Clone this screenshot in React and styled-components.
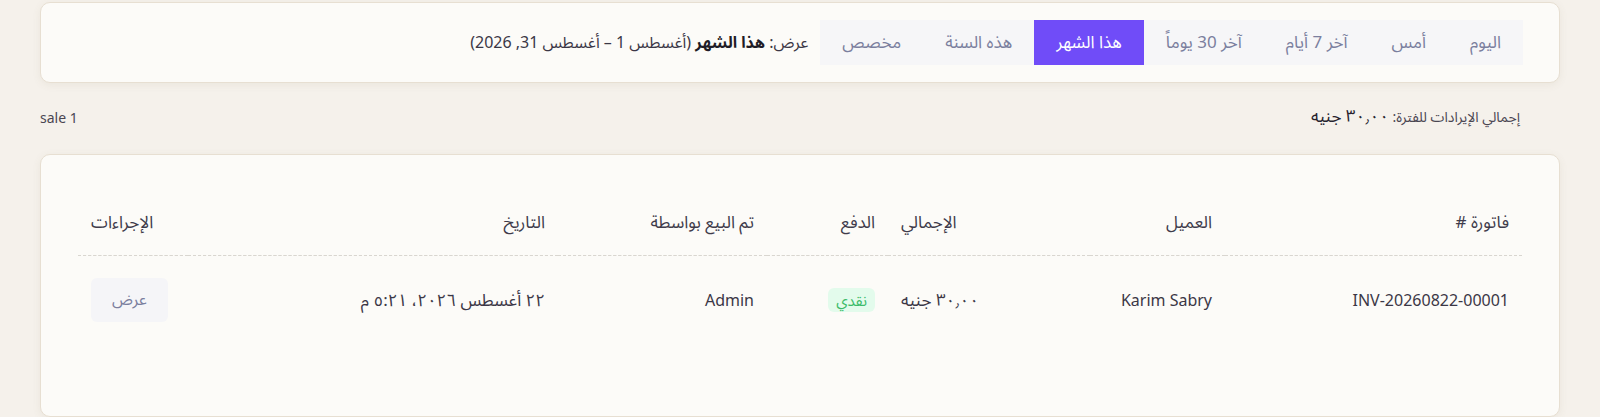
import React from "react";
import styled, { createGlobalStyle } from "styled-components";

const GlobalStyle = createGlobalStyle`
  html, body {
    margin: 0;
    padding: 0;
    background: #f5f1eb;
  }
  body {
    font-family: "Noto Sans", "Noto Sans Arabic", "Noto Kufi Arabic", "DejaVu Sans", sans-serif;
    color: #3b3746;
  }
  * {
    box-sizing: border-box;
  }
`;

const Page = styled.div`
  direction: rtl;
  padding: 2px 40px 0;
`;

const Card = styled.div`
  background: #fcfbf8;
  border: 1px solid #e7dfd2;
  border-radius: 10px;
  box-shadow: 0 2px 8px rgba(120, 100, 70, 0.08);
`;

const FilterCard = styled(Card)`
  display: flex;
  align-items: center;
  gap: 12px;
  padding: 17px 36px;
`;

const TabGroup = styled.div`
  display: flex;
  background: #f6f6f8;
  height: 45px;
`;

const Tab = styled.button`
  border: none;
  background: ${(p) => (p.$active ? "#704cf8" : "transparent")};
  color: ${(p) => (p.$active ? "#ffffff" : "#7b7f9e")};
  font-family: inherit;
  font-size: 17px;
  padding: 0 22px;
  cursor: pointer;
`;

const RangeText = styled.div`
  font-size: 16px;
  color: #3b3746;

  strong {
    font-weight: 700;
    color: #1f1c26;
  }
`;

const Summary = styled.div`
  display: flex;
  justify-content: space-between;
  align-items: center;
  height: 26px;
  margin: 21px 0 24px;
  padding-right: 40px;
`;

const Revenue = styled.div`
  font-size: 14px;
  color: #4a4652;

  span {
    font-size: 17px;
    font-weight: 400;
    color: #26232d;
  }
`;

const Count = styled.div`
  direction: ltr;
  font-size: 14px;
  color: #4a4652;
`;

const TableCard = styled(Card)`
  padding: 36px 37px 72px;
`;

const Table = styled.table`
  width: 100%;
  border-collapse: collapse;
  table-layout: fixed;
`;

const Th = styled.th`
  font-weight: 400;
  font-size: 17px;
  color: #3f3b4b;
  text-align: ${(p) => (p.$end ? "left" : "right")};
  padding: 19px 13px 21px;
  line-height: 24px;
  border-bottom: 1px dashed #d9d6d0;
  white-space: nowrap;
`;

const Td = styled.td`
  font-size: ${(p) => (p.$latin ? "16px" : "17px")};
  color: #3b3746;
  text-align: ${(p) => (p.$end ? "left" : "right")};
  padding: 22px 13px;
  line-height: 24px;
  white-space: nowrap;
`;

const Badge = styled.span`
  display: inline-block;
  background: #e3fbec;
  color: #3dbb6b;
  font-size: 15px;
  padding: 0 8px;
  line-height: 24px;
  border-radius: 6px;
`;

const ViewButton = styled.button`
  border: none;
  background: #f5f5f8;
  color: #7b7f9e;
  font-family: inherit;
  font-size: 16px;
  width: 77px;
  height: 44px;
  border-radius: 6px;
  cursor: pointer;
`;

const tabs = [
  "اليوم",
  "أمس",
  "آخر 7 أيام",
  "آخر 30 يوماً",
  "هذا الشهر",
  "هذه السنة",
  "مخصص",
];

const columns = [
  { label: "فاتورة #", width: 297 },
  { label: "العميل", width: 135 },
  { label: "الإجمالي", width: 202, end: true },
  { label: "الدفع", width: 121 },
  { label: "تم البيع بواسطة", width: 209 },
  { label: "التاريخ", width: 370 },
  { label: "الإجراءات", width: 110, end: true },
];

const sales = [
  {
    id: "INV-20260822-00001",
    customer: "Karim Sabry",
    total: "٣٠٫٠٠ جنيه",
    payment: "نقدي",
    seller: "Admin",
    date: "٢٢ أغسطس ٢٠٢٦، ٥:٢١ م",
  },
];

const App = () => {
  return (
    <>
      <GlobalStyle />
      <Page>
        <FilterCard>
          <TabGroup>
            {tabs.map((t) => (
              <Tab key={t} $active={t === "هذا الشهر"}>
                {t}
              </Tab>
            ))}
          </TabGroup>
          <RangeText>
            عرض: <strong>هذا الشهر</strong> (أغسطس 1 – أغسطس 31, 2026)
          </RangeText>
        </FilterCard>

        <Summary>
          <Revenue>
            إجمالي الإيرادات للفترة: <span>٣٠٫٠٠ جنيه</span>
          </Revenue>
          <Count>sale 1</Count>
        </Summary>

        <TableCard>
          <Table>
            <colgroup>
              {columns.map((c) => (
                <col key={c.label} style={{ width: c.width }} />
              ))}
            </colgroup>
            <thead>
              <tr>
                {columns.map((c) => (
                  <Th key={c.label} $end={c.end}>
                    {c.label}
                  </Th>
                ))}
              </tr>
            </thead>
            <tbody>
              {sales.map((s) => (
                <tr key={s.id}>
                  <Td $latin>{s.id}</Td>
                  <Td $latin>{s.customer}</Td>
                  <Td $end>{s.total}</Td>
                  <Td>
                    <Badge>{s.payment}</Badge>
                  </Td>
                  <Td $latin>{s.seller}</Td>
                  <Td>{s.date}</Td>
                  <Td $end>
                    <ViewButton>عرض</ViewButton>
                  </Td>
                </tr>
              ))}
            </tbody>
          </Table>
        </TableCard>
      </Page>
    </>
  );
};

export default App;
